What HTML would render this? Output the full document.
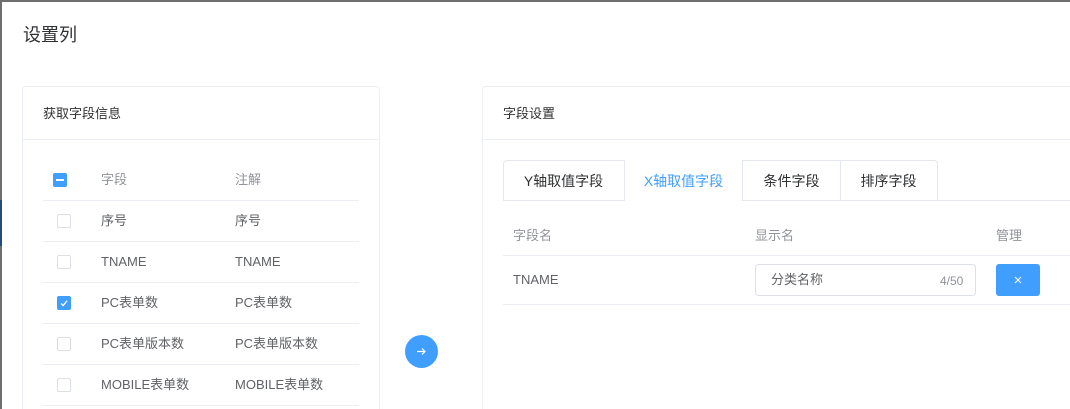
<!DOCTYPE html>
<html style="width:1070px;height:409px;overflow:hidden"><head><meta charset="utf-8"><style>
*{box-sizing:border-box;margin:0;padding:0}
body{width:1070px;height:409px;overflow:hidden;background:#fff;font-family:"Liberation Sans","Noto Sans CJK SC",sans-serif;position:relative;color:#606266}
.abs{position:absolute}
.t{font-size:13px;line-height:16px;white-space:nowrap}
.cb{position:absolute;width:14px;height:14px;border:1px solid #dcdfe6;border-radius:2px;background:#fff}
.line{position:absolute;height:1px;background:#ebeef5}
</style></head><body>
<div class="abs" style="left:0;top:0;width:1070px;height:2px;background:#6e6e6e"></div>
<div class="abs" style="left:0;top:0;width:2px;height:409px;background:#6e6e6e"></div>
<div class="abs" style="left:0;top:200px;width:2px;height:46px;background:#1f4e79"></div>
<div class="abs" style="left:23px;top:24px;font-size:18px;line-height:22px;color:#303133">设置列</div>

<div class="abs" style="left:22px;top:86px;width:358px;height:340px;border:1px solid #ebeef5;border-radius:4px"></div>
<div class="line" style="left:23px;top:139px;width:356px"></div>
<div class="abs t" style="left:43px;top:106px;color:#303133">获取字段信息</div>
<div class="abs" style="left:53px;top:173px;width:14px;height:14px;background:#409eff;border-radius:2px"><div style="position:absolute;left:3px;top:6px;width:8px;height:2px;background:#fff"></div></div>
<div class="abs t" style="left:101px;top:172px;color:#909399">字段</div>
<div class="abs t" style="left:235px;top:172px;color:#909399">注解</div>
<div class="line" style="left:43px;top:200px;width:316px"></div>

<div class="cb" style="left:57px;top:214px"></div>
<div class="abs t" style="left:101px;top:213px">序号</div><div class="abs t" style="left:235px;top:213px">序号</div>
<div class="line" style="left:43px;top:241px;width:316px"></div>
<div class="cb" style="left:57px;top:255px"></div>
<div class="abs t" style="left:101px;top:254px">TNAME</div><div class="abs t" style="left:235px;top:254px">TNAME</div>
<div class="line" style="left:43px;top:282px;width:316px"></div>
<div class="cb" style="left:57px;top:296px;background:#409eff;border-color:#409eff"><svg width="12" height="12" style="position:absolute;left:0;top:0"><path d="M3 6.5 L5.2 8.5 L9 3.8" stroke="#fff" stroke-width="1.3" fill="none"/></svg></div>
<div class="abs t" style="left:101px;top:295px">PC表单数</div><div class="abs t" style="left:235px;top:295px">PC表单数</div>
<div class="line" style="left:43px;top:323px;width:316px"></div>
<div class="cb" style="left:57px;top:337px"></div>
<div class="abs t" style="left:101px;top:336px">PC表单版本数</div><div class="abs t" style="left:235px;top:336px">PC表单版本数</div>
<div class="line" style="left:43px;top:364px;width:316px"></div>
<div class="cb" style="left:57px;top:378px"></div>
<div class="abs t" style="left:101px;top:377px">MOBILE表单数</div><div class="abs t" style="left:235px;top:377px">MOBILE表单数</div>
<div class="line" style="left:43px;top:405px;width:316px"></div>

<div class="abs" style="left:405px;top:335px;width:33px;height:33px;border-radius:50%;background:#409eff"><svg width="33" height="33"><path d="M12 16.5 H20 M17 13.5 L20 16.5 L17 19.5" stroke="#fff" stroke-width="1.2" fill="none"/></svg></div>

<div class="abs" style="left:482px;top:86px;width:600px;height:340px;border:1px solid #ebeef5;border-radius:4px"></div>
<div class="line" style="left:483px;top:139px;width:600px"></div>
<div class="abs t" style="left:503px;top:106px;color:#303133">字段设置</div>

<div class="abs" style="left:503px;top:200px;width:567px;height:1px;background:#e4e7ed"></div>
<div class="abs" style="left:503px;top:160px;width:435px;height:41px;border:1px solid #e4e7ed;border-bottom:none;border-radius:4px 4px 0 0"></div>
<div class="abs" style="left:624px;top:160px;width:119px;height:41px;border-left:1px solid #e4e7ed;border-right:1px solid #e4e7ed;background:#fff"></div>
<div class="abs" style="left:840px;top:160px;width:1px;height:40px;background:#e4e7ed"></div>
<div class="abs" style="left:503px;top:172px;width:121px;text-align:center;font-size:14px;line-height:18px;color:#303133">Y轴取值字段</div>
<div class="abs" style="left:624px;top:172px;width:119px;text-align:center;font-size:14px;line-height:18px;color:#409eff">X轴取值字段</div>
<div class="abs" style="left:743px;top:172px;width:97px;text-align:center;font-size:14px;line-height:18px;color:#303133">条件字段</div>
<div class="abs" style="left:840px;top:172px;width:97px;text-align:center;font-size:14px;line-height:18px;color:#303133">排序字段</div>

<div class="abs t" style="left:513px;top:228px;color:#909399">字段名</div>
<div class="abs t" style="left:755px;top:228px;color:#909399">显示名</div>
<div class="abs t" style="left:996px;top:228px;color:#909399">管理</div>
<div class="line" style="left:503px;top:255px;width:567px"></div>
<div class="abs t" style="left:513px;top:272px">TNAME</div>
<div class="abs" style="left:755px;top:264px;width:221px;height:32px;border:1px solid #dcdfe6;border-radius:4px"></div>
<div class="abs t" style="left:771px;top:272px">分类名称</div>
<div class="abs t" style="left:940px;top:273px;color:#909399;font-size:12px">4/50</div>
<div class="abs" style="left:996px;top:264px;width:44px;height:32px;background:#409eff;border-radius:3px"><svg width="44" height="32"><path d="M19 13 L25 19 M25 13 L19 19" stroke="#fff" stroke-width="1.1"/></svg></div>
<div class="line" style="left:503px;top:304px;width:567px"></div>
</body></html>
